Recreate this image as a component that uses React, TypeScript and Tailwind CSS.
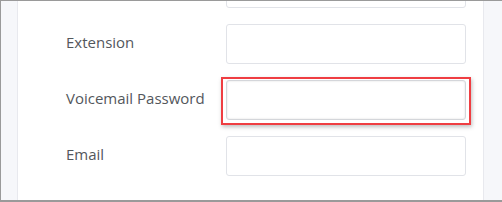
export default function App() {
  const rows = [
    { label: "", top: true },
    { label: "Extension" },
    { label: "Voicemail Password", highlight: true },
    { label: "Email" },
  ];
  return (
    <div
      className="w-[502px] h-[202px] overflow-hidden border-l border-t border-b-2 border-[#9a9a9a] bg-[#f6f7fa] flex"
      style={{ fontFamily: '"Open Sans", "Noto Sans", sans-serif' }}
    >
      <div className="w-[16px] shrink-0" />
      <div className="w-[467px] shrink-0 bg-white border-x border-[#e8e9ee] overflow-hidden">
        <div className="flex flex-col gap-4 mt-[-33px] pl-[48px]">
          {rows.map((r, i) => (
            <div key={i} className="flex items-center h-[40px]">
              <div className="w-[160px] text-[15px] text-[#53575c] pb-[4px]">{r.label}</div>
              <div className="relative">
                {r.highlight && (
                  <div className="absolute left-[-5px] right-[-5px] top-[-3px] bottom-[-5px] border-2 border-[#ef3e42] shadow-[1px_2px_4px_rgba(0,0,0,0.25)]" />
                )}
                <div
                  className={
                    "relative w-[240px] h-[40px] rounded-[3px] border bg-white " +
                    (r.highlight
                      ? "border-[#d4d6da] shadow-[inset_0_0_2px_rgba(0,0,0,0.15)]"
                      : "border-[#e1e3e8]")
                  }
                />
              </div>
            </div>
          ))}
        </div>
      </div>
      <div className="flex-1" />
    </div>
  );
}
